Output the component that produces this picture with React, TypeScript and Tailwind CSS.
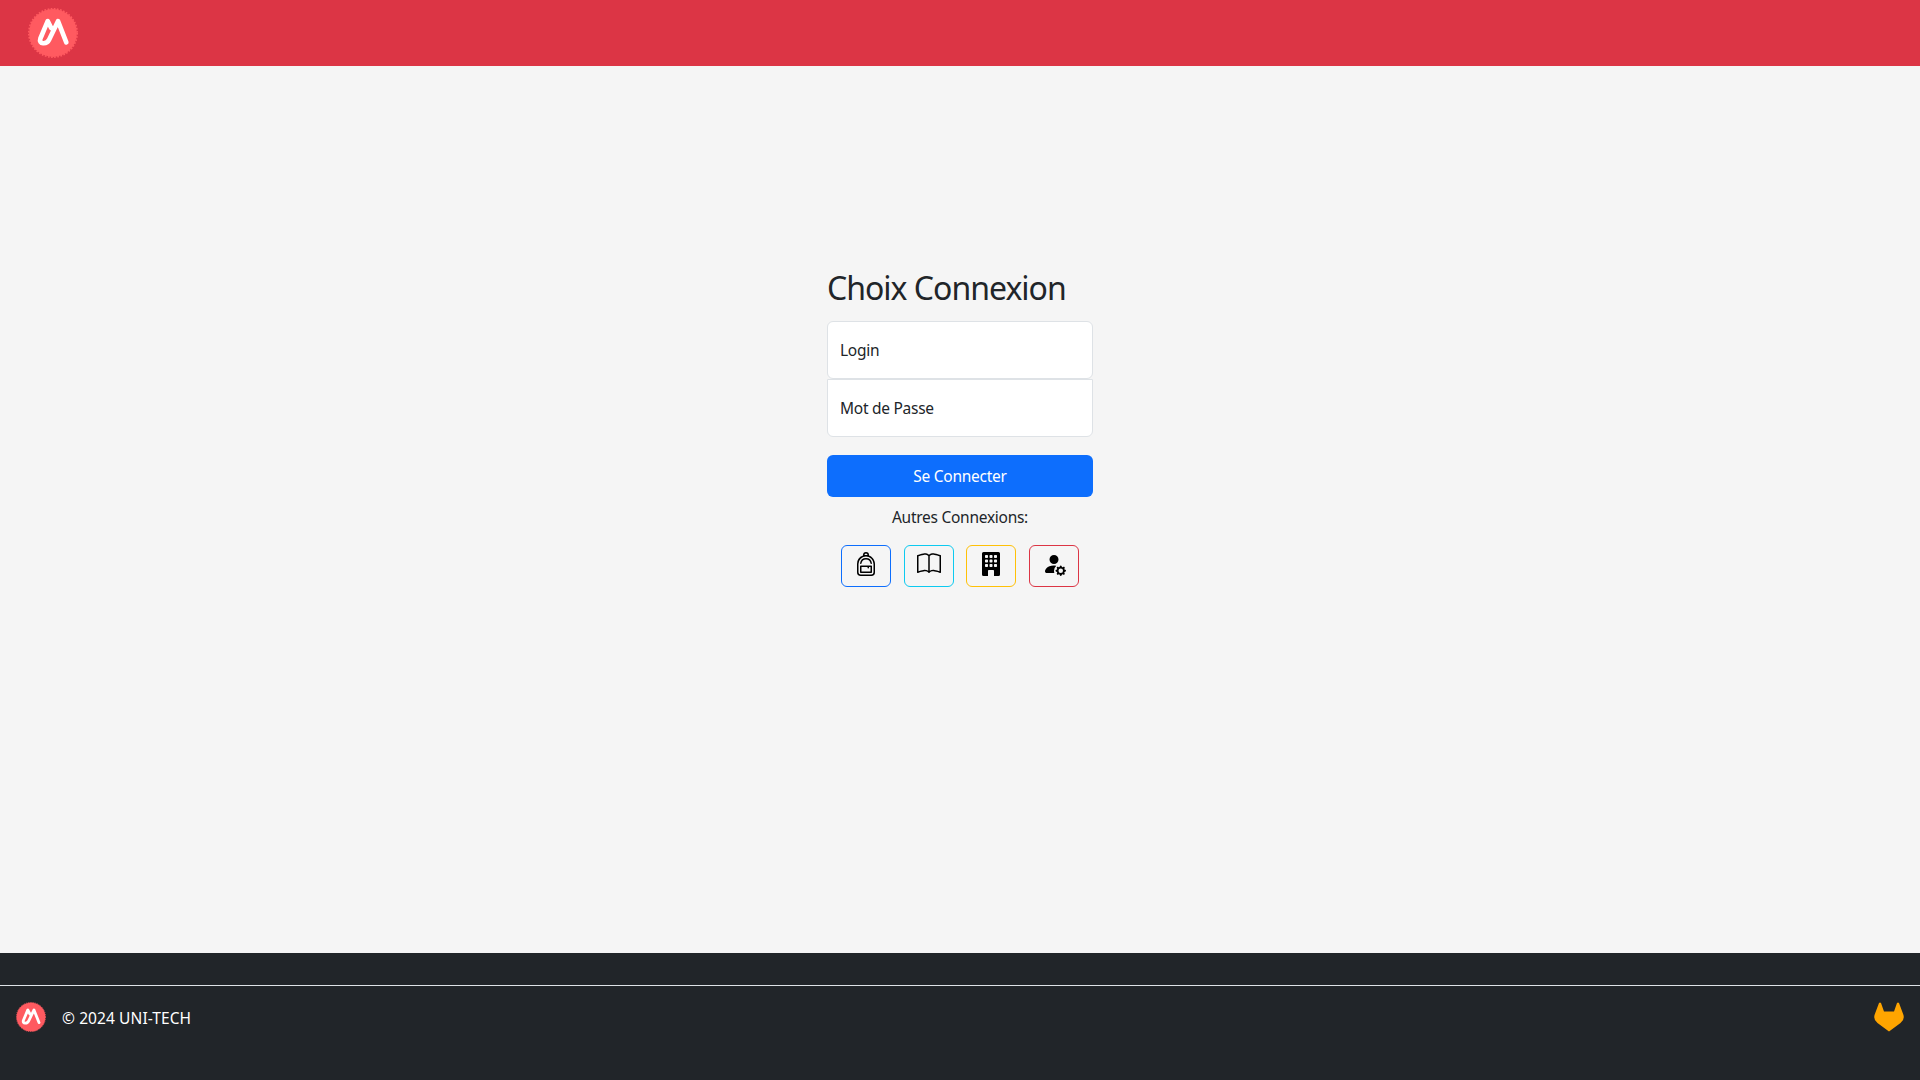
import type { ReactNode } from "react";
import { BsBackpack, BsBook, BsBuildingFill, BsPersonFillGear } from "react-icons/bs";

function Logo({ size }: { size: number }) {
  return (
    <svg width={size} height={size} viewBox="0 0 50 50" className="shrink-0">
      <circle cx="25" cy="25" r="23.9" fill="#ff5a60" />
      <circle cx="25" cy="25" r="24.2" fill="none" stroke="#ff5a60" strokeWidth="1.6" strokeDasharray="1.7 1.47" />
      <path
        d="M23.2 20 L19.700 13.200 L12.400 30.500 C10.200 36.500 18.800 36.800 21.200 31.500 L30 13.200 L38.300 34.300"
        fill="none"
        stroke="#fff"
        strokeWidth="4.700"
        strokeLinecap="round"
        strokeLinejoin="round"
      />
    </svg>
  );
}

function IconButton({ border, children }: { border: string; children: ReactNode }) {
  return (
    <button className={`flex h-[42px] w-[50px] justify-center rounded-md border pt-1.5 text-black ${border}`}>
      {children}
    </button>
  );
}

export default function App() {
  return (
    <div className="flex h-[1080px] flex-col bg-[#f5f5f5] font-['Noto_Sans',sans-serif] text-[15.5px] leading-6 text-[#212529]">
      <header className="flex h-[66px] shrink-0 items-center bg-[#dc3545] pl-7">
        <Logo size={50} />
      </header>
      <main className="flex-1 pt-[203px]">
        <div className="mx-auto w-[266px] tracking-[-0.27px]">
          <h1 className="text-[32px] leading-[38px] tracking-[-1px]">Choix Connexion</h1>
          <div className="mt-[14px] flex h-[58px] items-center rounded-md border border-[#dee2e6] bg-white px-3">Login</div>
          <div className="flex h-[58px] items-center rounded-b-md border border-[#dee2e6] bg-white px-3">Mot de Passe</div>
          <button className="mt-[18px] h-[42px] w-full rounded-md bg-[#0d6efd] text-white">Se Connecter</button>
          <p className="mt-2 text-center">Autres Connexions:</p>
          <div className="mt-4 flex justify-center gap-[12.67px]">
            <IconButton border="border-[#0d6efd]"><BsBackpack size={24} /></IconButton>
            <IconButton border="border-[#0dcaf0]"><BsBook size={24} /></IconButton>
            <IconButton border="border-[#ffc107]"><BsBuildingFill size={24} /></IconButton>
            <IconButton border="border-[#dc3545]"><BsPersonFillGear size={24} /></IconButton>
          </div>
        </div>
      </main>
      <footer className="h-[127px] bg-[#212529] text-white">
        <div className="h-[33px] border-b border-[#dee2e6]" />
        <div className="flex items-center justify-between px-4 pt-4">
          <div className="flex items-center gap-4">
            <Logo size={30} />
            <span className="pt-0.5 tracking-[0.1px]">© 2024 UNI-TECH</span>
          </div>
          <svg width="30" height="30" viewBox="0 0 30 30" fill="orange">
            <path d="M5 1 Q6 0 7 1 L10 9.500 H20 L23 1 Q24 0 25 1 L29.300 12.500 Q31 17.500 26.500 21 L15 29.500 L3.500 21 Q-1 17.500 0.700 12.500 Z" />
          </svg>
        </div>
      </footer>
    </div>
  );
}
